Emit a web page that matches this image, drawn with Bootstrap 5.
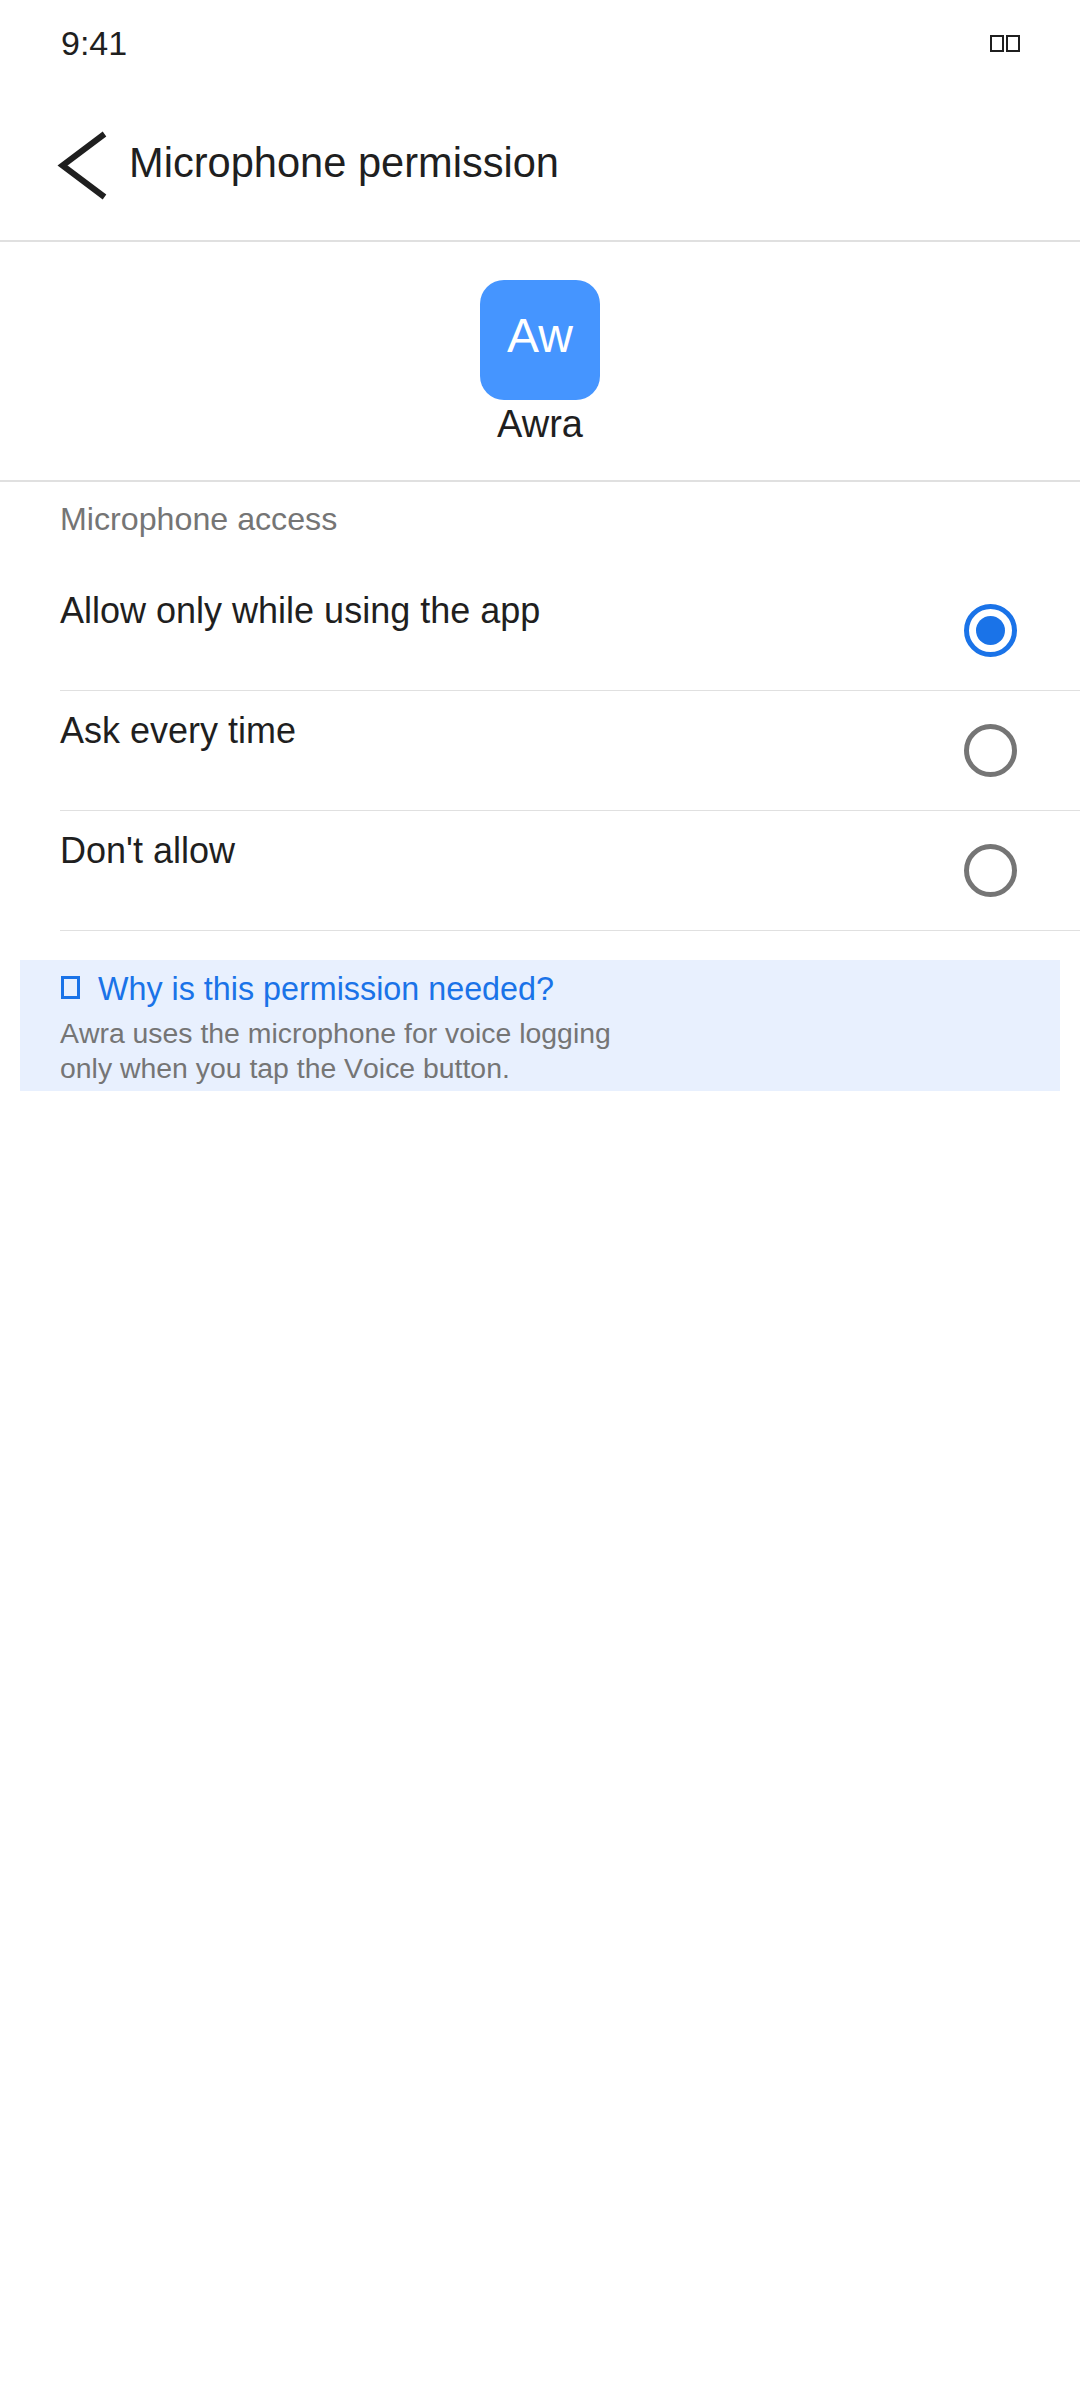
<!DOCTYPE html>
<html lang="en">
<head>
<meta charset="utf-8">
<title>Microphone permission</title>
<link href="https://cdn.jsdelivr.net/npm/bootstrap@5.3.0/dist/css/bootstrap.min.css" rel="stylesheet">
<style>
html,body{margin:0;background:#fff;}
body{width:1080px;height:2392px;font-family:"Liberation Sans",Arial,sans-serif;color:#1f1f1f;overflow:hidden;}
.stat-bar{height:84px;padding:2px 60px 0 61px;}
.stat-time{font-size:34px;line-height:1;}
.tofu{display:block;width:14px;height:17px;border:2.500px solid #1f1f1f;}
.tofu-pair{gap:2px;}
.head-bar{height:158px;padding:0 0 0 57px;gap:22px;border-bottom:2px solid #e0e0e0;}
.back-mark{margin-top:7px;}
.head-title{font-size:41.6px;line-height:1;padding-top:2px;}
.app-block{height:240px;padding-top:38px;border-bottom:2px solid #e0e0e0;}
.app-tile{width:120px;height:120px;border-radius:24px;background:#4595ff;color:#fff;font-size:48px;padding-bottom:8px;}
.app-name{font-size:38px;line-height:44px;margin-top:2px;}
.sec-label{font-size:32.2px;line-height:38px;color:#757575;padding:18px 0 0 60px;height:89px;}
.perm-row{height:120px;margin-left:60px;border-bottom:1px solid #e0e0e0;padding-right:63px;}
.perm-text{font-size:36px;line-height:42px;padding-top:19px;}
.dial{width:53px;height:53px;border-radius:50%;border:5px solid #757575;margin-top:33px;}
.dial-on{border-color:#1a73e8;}
.dial-dot{width:29px;height:29px;border-radius:50%;background:#1a73e8;}
.why-panel{margin:29px 20px 0;height:131px;background:#e8f0fe;padding:9px 0 0 41px;}
.why-head{font-size:32.3px;line-height:40px;color:#1a73e8;gap:18px;}
.why-box{display:block;width:19px;height:23px;border:3.500px solid #1a73e8;margin-top:-3px;}
.why-text{font-size:28.400px;line-height:35px;color:#757575;margin:7px 0 0 -1px;font-kerning:none;}
</style>
</head>
<body>
<div class="stat-bar d-flex align-items-center justify-content-between">
  <span class="stat-time">9:41</span>
  <span class="tofu-pair d-flex"><i class="tofu"></i><i class="tofu"></i></span>
</div>
<div class="head-bar d-flex align-items-center">
  <svg class="back-mark" width="50" height="70" viewBox="0 0 50 70" aria-hidden="true"><path d="M47.500 3 L5.500 34.500 L47.500 66" fill="none" stroke="#1f1f1f" stroke-width="6"/></svg>
  <span class="head-title">Microphone permission</span>
</div>
<div class="app-block d-flex flex-column align-items-center">
  <div class="app-tile d-flex align-items-center justify-content-center">Aw</div>
  <div class="app-name">Awra</div>
</div>
<div class="sec-label">Microphone access</div>
<div class="perm-row d-flex justify-content-between">
  <span class="perm-text">Allow only while using the app</span>
  <span class="dial dial-on d-flex align-items-center justify-content-center"><span class="dial-dot"></span></span>
</div>
<div class="perm-row d-flex justify-content-between">
  <span class="perm-text">Ask every time</span>
  <span class="dial"></span>
</div>
<div class="perm-row d-flex justify-content-between">
  <span class="perm-text">Don't allow</span>
  <span class="dial"></span>
</div>
<div class="why-panel">
  <div class="why-head d-flex align-items-center"><i class="why-box"></i><span>Why is this permission needed?</span></div>
  <div class="why-text">Awra uses the microphone for voice logging<br>only when you tap the Voice button.</div>
</div>
<script src="https://cdn.jsdelivr.net/npm/bootstrap@5.3.0/dist/js/bootstrap.bundle.min.js"></script>
</body>
</html>
